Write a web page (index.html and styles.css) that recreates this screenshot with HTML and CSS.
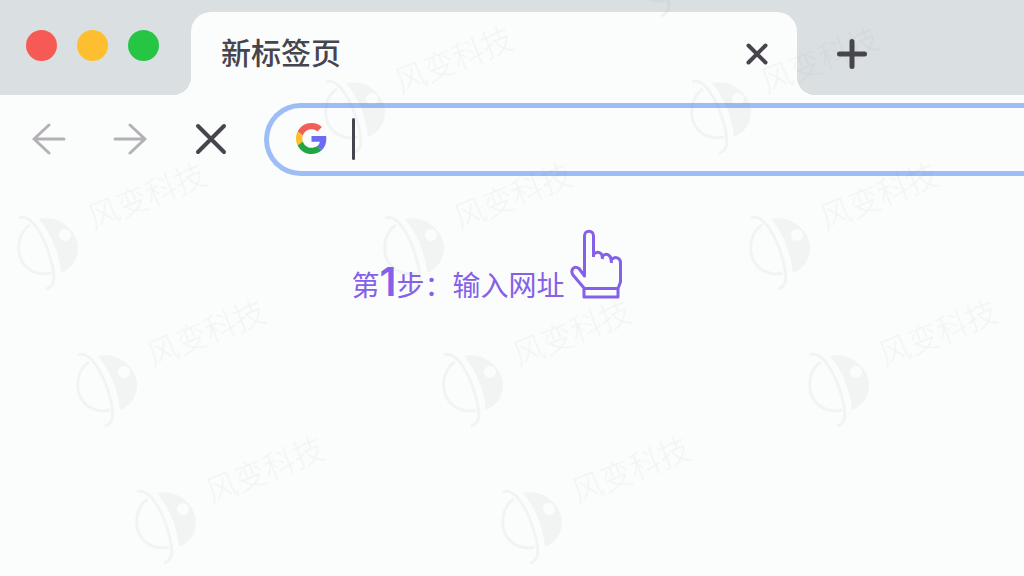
FILE: index.html
```html
<!DOCTYPE html>
<html lang="zh-CN">
<head>
<meta charset="utf-8">
<meta name="viewport" content="width=device-width, initial-scale=1">
<title>新标签页</title>
<link rel="stylesheet" href="styles.css">
</head>
<body>
<div class="browser">
  <header class="tab-strip">
    <div class="window-controls">
      <button class="dot dot-close" aria-label="关闭窗口"></button>
      <button class="dot dot-min" aria-label="最小化"></button>
      <button class="dot dot-max" aria-label="最大化"></button>
    </div>
    <div class="tab">
      <span class="tab-title">新标签页</span>
      <button class="icon-button" aria-label="关闭标签页">
        <svg width="24" height="24" viewBox="0 0 24 24"><path class="stroke-dark stroke-4" d="M3.500 3.500L20.500 20.500M20.500 3.500L3.500 20.500"/></svg>
      </button>
    </div>
    <button class="icon-button new-tab" aria-label="打开新标签页">
      <svg width="32" height="32" viewBox="0 0 32 32"><path class="stroke-dark stroke-5" d="M16 3.500V28.500M3.500 16H28.500"/></svg>
    </button>
  </header>

  <nav class="toolbar">
    <div class="nav-buttons">
      <button class="icon-button" aria-label="后退">
        <svg width="34" height="34" viewBox="0 0 34 34"><path class="stroke-grey" d="M32 17H2M17 3L2 17L17 31"/></svg>
      </button>
      <button class="icon-button" aria-label="前进">
        <svg width="34" height="34" viewBox="0 0 34 34"><path class="stroke-grey" d="M2 17H32M17 3L32 17L17 31"/></svg>
      </button>
      <button class="icon-button" aria-label="停止加载">
        <svg width="34" height="34" viewBox="0 0 34 34"><path class="stroke-dark stroke-4" d="M4 4L30 30M30 4L4 30"/></svg>
      </button>
    </div>
    <div class="address">
      <svg class="google" width="31" height="31" viewBox="0 0 48 48" aria-hidden="true">
        <path fill="#f25f57" d="M24 9.500c3.540 0 6.710 1.220 9.210 3.600l6.850-6.850C35.900 2.380 30.470 0 24 0 14.620 0 6.510 5.380 2.560 13.220l7.980 6.190C12.430 13.720 17.740 9.500 24 9.500z"/>
        <path fill="#6b6cf3" d="M46.980 24.550c0-1.570-.150-3.090-.380-4.550H24v9.020h12.940c-.580 2.960-2.260 5.480-4.780 7.180l7.730 6c4.510-4.180 7.090-10.360 7.090-17.650z"/>
        <path fill="#fdbf2d" d="M10.530 28.590c-.480-1.450-.760-2.990-.760-4.590s.270-3.140.760-4.590l-7.980-6.190C.92 16.460 0 20.120 0 24c0 3.880.92 7.540 2.560 10.780l7.970-6.190z"/>
        <path fill="#24a545" d="M24 48c6.480 0 11.930-2.130 15.890-5.810l-7.730-6c-2.150 1.450-4.920 2.300-8.160 2.300-6.260 0-11.570-4.220-13.470-9.910l-7.980 6.190C6.510 42.620 14.620 48 24 48z"/>
      </svg>
      <span class="caret"></span>
      <input class="address-input" type="text" aria-label="地址栏">
    </div>
  </nav>

  <main class="page">
    <p class="step">第<strong class="step-number">1</strong>步：输入网址</p>
    <svg class="hand" width="56" height="72" viewBox="0 0 56 72" aria-hidden="true">
      <path d="M15 60L4 47C1 42 5 37 10 40.500L15.500 48V8C15.500 1.500 24.500 1.500 24.500 8V29M24.500 26.500C28 22.500 34 24 33.300 31M33.300 28.500C37 24 43 27 42.300 35M42.300 32C46 27.500 51.500 30 51.500 34.500V54L49 60.500M15 60.500H49V69H15Z"/>
    </svg>
  </main>

  <div class="watermarks" aria-hidden="true">
    <svg class="defs" width="0" height="0">
      <symbol id="planet" viewBox="0 0 66 84">
        <path class="ring" d="M14 12C3 19 1 33 4 44C9 58 23 63 35 60M3 5C14 0 28 20 36 51C39 66 39 73 30 76"/>
        <path class="globe" fill-rule="evenodd" d="M23 6C43 2 61 17 62 34C62 47 56 55 45 60C43 40 36 22 23 6ZM49 16A6 6 0 1 0 49 28A6 6 0 1 0 49 16Z"/>
      </symbol>
    </svg>
    <div class="mark mark-1"><svg width="66" height="84"><use href="#planet"/></svg><span>风变科技</span></div>
    <div class="mark mark-2"><svg width="66" height="84"><use href="#planet"/></svg><span>风变科技</span></div>
    <div class="mark mark-3"><svg width="66" height="84"><use href="#planet"/></svg><span>风变科技</span></div>
    <div class="mark mark-4"><svg width="66" height="84"><use href="#planet"/></svg><span>风变科技</span></div>
    <div class="mark mark-5"><svg width="66" height="84"><use href="#planet"/></svg><span>风变科技</span></div>
    <div class="mark mark-6"><svg width="66" height="84"><use href="#planet"/></svg><span>风变科技</span></div>
    <div class="mark mark-7"><svg width="66" height="84"><use href="#planet"/></svg><span>风变科技</span></div>
    <div class="mark mark-8"><svg width="66" height="84"><use href="#planet"/></svg><span>风变科技</span></div>
    <div class="mark mark-9"><svg width="66" height="84"><use href="#planet"/></svg><span>风变科技</span></div>
    <div class="mark mark-10"><svg width="66" height="84"><use href="#planet"/></svg><span>风变科技</span></div>
    <div class="mark mark-11"><svg width="66" height="84"><use href="#planet"/></svg></div>
  </div>
</div>
</body>
</html>
```

FILE: styles.css
```css
* {
  box-sizing: border-box;
}

body {
  margin: 0;
  background: #fbfcfc;
  color: #46454d;
  font-family: "Noto Sans CJK SC", sans-serif;
}

button {
  padding: 0;
  border: 0;
  background: none;
}

svg {
  display: block;
}

.browser {
  position: relative;
  display: flex;
  flex-direction: column;
  min-height: 100vh;
  overflow: hidden;
}

.tab-strip {
  display: flex;
  align-items: stretch;
  padding-top: 12px;
  background: #dae0e2;
}

.window-controls {
  display: flex;
  flex: none;
  align-items: flex-start;
  gap: 20px;
  width: 191px;
  padding: 18px 0 0 26px;
}

.dot {
  width: 31px;
  height: 31px;
  border-radius: 50%;
}

.dot-close {
  background: #f55b54;
}

.dot-min {
  background: #fdbe2f;
}

.dot-max {
  background: #26c544;
}

.tab {
  position: relative;
  display: flex;
  flex: 0 1 606px;
  align-items: center;
  justify-content: space-between;
  height: 83px;
  padding: 0 28px 0 30px;
  border-radius: 20px 20px 0 0;
  background: #fbfcfc;
}

.tab::before,
.tab::after {
  content: "";
  position: absolute;
  bottom: 0;
  width: 18px;
  height: 18px;
}

.tab::before {
  right: 100%;
  background: radial-gradient(circle at 0 0, transparent 18px, #fbfcfc 18px);
}

.tab::after {
  left: 100%;
  background: radial-gradient(circle at 100% 0, transparent 18px, #fbfcfc 18px);
}

.tab-title {
  padding-bottom: 5px;
  font-size: 30px;
  font-weight: 500;
  line-height: 44px;
}

.icon-button {
  flex: none;
}

.new-tab {
  margin-left: 39px;
}

.stroke-dark,
.stroke-grey {
  fill: none;
  stroke: #46454d;
  stroke-linecap: round;
  stroke-linejoin: round;
}

.stroke-grey {
  stroke: #b3b1b5;
  stroke-width: 3;
}

.stroke-4 {
  stroke-width: 4;
}

.stroke-5 {
  stroke-width: 5;
}

.toolbar {
  display: flex;
  align-items: center;
  padding: 8px 0 0 32px;
}

.nav-buttons {
  display: flex;
  flex: none;
  gap: 47px;
  width: 232px;
  padding-bottom: 1px;
}

.address {
  display: flex;
  flex: 1;
  align-items: center;
  height: 73px;
  padding: 0 0 2px 27px;
  border: 5px solid #9dbdf7;
  border-right: 0;
  border-radius: 37px 0 0 37px;
}

.google {
  flex: none;
}

.caret {
  flex: none;
  width: 3px;
  height: 42px;
  margin-left: 25px;
  border-radius: 2px;
  background: #46454d;
}

.address-input {
  flex: 1;
  min-width: 0;
  height: 42px;
  border: 0;
  outline: 0;
  background: transparent;
  color: inherit;
  font: 28px "Noto Sans CJK SC", sans-serif;
}

.page {
  display: flex;
  align-items: flex-end;
  justify-content: center;
  gap: 5px;
  padding: 52px 47px 0 0;
}

.step {
  margin: 0;
  color: #8461e8;
  font-size: 28px;
  line-height: 32px;
  white-space: nowrap;
}

.step-number {
  font-family: Inter, sans-serif;
  font-size: 40px;
  font-weight: 600;
}

.hand {
  flex: none;
  fill: none;
  stroke: #8461e8;
  stroke-width: 3;
  stroke-linejoin: round;
}

.watermarks {
  position: absolute;
  inset: 0;
  overflow: hidden;
  pointer-events: none;
}

.defs {
  position: absolute;
}

.mark {
  position: absolute;
  color: #60706f;
  opacity: 0.055;
}

.mark span {
  position: absolute;
  left: 68px;
  top: -39px;
  font-size: 31px;
  font-weight: 300;
  line-height: 40px;
  white-space: nowrap;
  transform: rotate(-22deg);
}

.ring {
  fill: none;
  stroke: currentColor;
  stroke-width: 3;
}

.globe {
  fill: currentColor;
}

.mark-1 { left: 16px; top: 213px; }
.mark-2 { left: 382px; top: 213px; }
.mark-3 { left: 748px; top: 213px; }
.mark-4 { left: 75px; top: 350px; }
.mark-5 { left: 441px; top: 350px; }
.mark-6 { left: 807px; top: 350px; }
.mark-7 { left: 134px; top: 487px; }
.mark-8 { left: 500px; top: 487px; }
.mark-9 { left: 323px; top: 77px; }
.mark-10 { left: 689px; top: 77px; }
.mark-11 { left: 631px; top: -60px; }
```
